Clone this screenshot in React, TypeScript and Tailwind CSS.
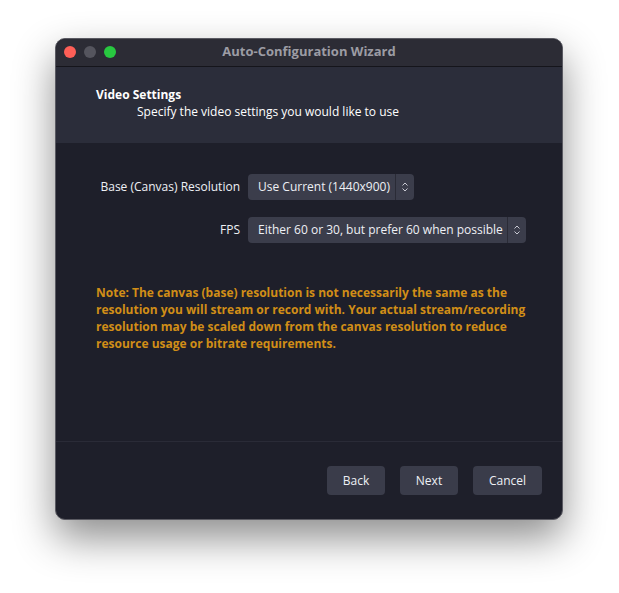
import { ReactNode } from "react";

const font = { fontFamily: '"Open Sans", "Noto Sans", sans-serif' };

const Chevrons = () => (
  <svg width="8" height="12" viewBox="0 0 8 12" fill="none">
    <path d="M1.5 4.5 4 2l2.5 2.5M1.5 7.5 4 10l2.5-2.5" stroke="#c9cad3" strokeWidth="1" />
  </svg>
);

const Combo = ({ children, width }: { children: ReactNode; width: string }) => (
  <div className={`flex h-[26px] items-stretch rounded-[4px] bg-[#3b3d4b] ${width}`}>
    <div className="flex flex-1 items-center pl-[10px] text-[12px] text-[#eef0f5]">{children}</div>
    <div className="flex w-[19px] items-center justify-center border-l border-[#2a2b36]">
      <Chevrons />
    </div>
  </div>
);

const WizardButton = ({ label, width }: { label: string; width: string }) => (
  <button className={`h-[29px] rounded-[4px] bg-[#3a3c4a] text-[12px] text-[#eef0f5] ${width}`}>
    {label}
  </button>
);

export default function App() {
  return (
    <div className="h-[593px] w-[619px] bg-white pl-[55px] pt-[38px]" style={font}>
      <div className="flex h-[482px] w-[508px] flex-col overflow-hidden rounded-[10px] border border-[#5a5a62] bg-[#1e1f2a] shadow-[0_18px_40px_rgba(0,0,0,0.45)]">
        <div className="relative flex h-[28px] items-center justify-center border-b border-[#15151b] bg-[#2c2c35]">
          <div className="absolute left-[8px] top-[7px] flex gap-[8px]">
            <span className="h-[12px] w-[12px] rounded-full bg-[#fe5f57]" />
            <span className="h-[12px] w-[12px] rounded-full bg-[#55555e]" />
            <span className="h-[12px] w-[12px] rounded-full bg-[#28c840]" />
          </div>
          <span className="-mt-[2px] text-[13px] font-bold text-[#9c9ca4]">Auto-Configuration Wizard</span>
        </div>

        <div className="flex h-[76px] flex-col bg-[#2b2d3a] pl-[40px] pt-[19px] text-[12px] leading-[17px] text-white">
          <span className="font-bold">Video Settings</span>
          <span className="pl-[41px]">Specify the video settings you would like to use</span>
        </div>

        <div className="flex flex-1 flex-col px-[40px] pt-[31px]">
          <div className="grid grid-cols-[144px_auto] items-center gap-x-[8px] gap-y-[17px]">
            <span className="text-right text-[12px] text-[#eef0f5]">Base (Canvas) Resolution</span>
            <Combo width="w-[166px]">Use Current (1440x900)</Combo>
            <span className="text-right text-[12px] text-[#eef0f5]">FPS</span>
            <Combo width="w-[278px]">Either 60 or 30, but prefer 60 when possible</Combo>
          </div>

          <p className="mt-[41px] w-[430px] text-[12px] font-bold leading-[17px] text-[#d18e17]">
            Note: The canvas (base) resolution is not necessarily the same as the resolution you
            will stream or record with. Your actual stream/recording resolution may be scaled down
            from the canvas resolution to reduce resource usage or bitrate requirements.
          </p>
        </div>

        <div className="flex h-[78px] items-start justify-end gap-[15px] border-t border-[#2a2b37] pr-[20px] pt-[24px]">
          <WizardButton label="Back" width="w-[58px]" />
          <WizardButton label="Next" width="w-[58px]" />
          <WizardButton label="Cancel" width="w-[69px]" />
        </div>
      </div>
    </div>
  );
}
